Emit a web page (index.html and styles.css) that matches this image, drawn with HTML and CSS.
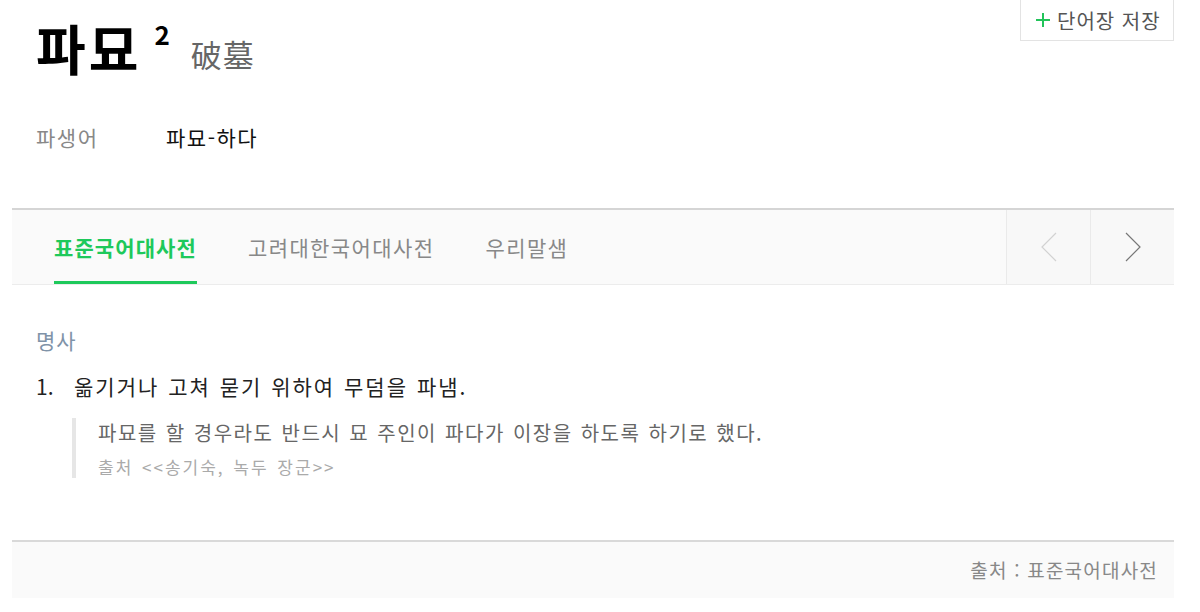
FILE: index.html
```html
<!DOCTYPE html>
<html lang="ko">
<head>
<meta charset="utf-8">
<link rel="stylesheet" href="styles.css">
</head>
<body>
<div class="page">
  <div class="top">
    <div class="head">
      <div class="title">
        <span class="word">파묘</span><sup class="num">2</sup><span class="hanja">破墓</span>
      </div>
      <div class="deriv">
        <span class="deriv-label">파생어</span>
        <span class="deriv-word">파묘-하다</span>
      </div>
    </div>
    <button class="save"><svg class="plus" width="16" height="16" viewBox="0 0 16 16"><path d="M8 1v14M1 8h14" stroke="#22c35a" stroke-width="2" fill="none"/></svg><span>단어장 저장</span></button>
  </div>

  <div class="tabs">
    <div class="tab-list">
      <span class="tab active">표준국어대사전</span>
      <span class="tab">고려대한국어대사전</span>
      <span class="tab">우리말샘</span>
    </div>
    <div class="nav">
      <div class="nav-btn">
        <svg width="16" height="30" viewBox="0 0 16 30"><polyline points="15,1 1,15 15,29" fill="none" stroke="#d2d2d2" stroke-width="1.2"/></svg>
      </div>
      <div class="nav-btn">
        <svg width="16" height="30" viewBox="0 0 16 30"><polyline points="1,1 15,15 1,29" fill="none" stroke="#777" stroke-width="1.2"/></svg>
      </div>
    </div>
  </div>

  <div class="content">
    <div class="pos">명사</div>
    <div class="sense"><span class="sense-num">1.</span><span>옮기거나 고쳐 묻기 위하여 무덤을 파냄.</span></div>
    <div class="example">
      <div class="ex-text">파묘를 할 경우라도 반드시 묘 주인이 파다가 이장을 하도록 하기로 했다.</div>
      <div class="ex-src">출처 &lt;&lt;송기숙, 녹두 장군&gt;&gt;</div>
    </div>
  </div>

  <div class="footer">출처 : 표준국어대사전</div>
</div>
</body>
</html>
```

FILE: styles.css
```css
* { box-sizing: border-box; }
html, body { margin: 0; padding: 0; background: #fff; }
body {
  font-family: "Noto Sans CJK KR", "Noto Sans", sans-serif;
  color: #222;
  width: 1200px;
  height: 612px;
  overflow: hidden;
}
.page {
  padding: 0 26px 0 12px;
}
.top {
  display: flex;
  justify-content: space-between;
  align-items: flex-start;
  height: 208px;
}
.head {
  padding-left: 24px;
  padding-top: 12px;
}
.title {
  display: flex;
  align-items: flex-start;
  height: 72px;
}
.word {
  font-size: 54px;
  font-weight: 700;
  color: #000;
  line-height: 72px;
  letter-spacing: 3px;
}
.num {
  font-size: 26px;
  font-weight: 700;
  color: #000;
  line-height: 30px;
  margin-left: 13px;
  margin-top: 7px;
  vertical-align: top;
}
.hanja {
  font-size: 31px;
  color: #666;
  margin-left: 21px;
  line-height: 44px;
  margin-top: 20px;
  letter-spacing: 1px;
}
.deriv {
  display: flex;
  margin-top: 38px;
  font-size: 21px;
  line-height: 30px;
  letter-spacing: 1.5px;
}
.deriv-label {
  color: #888;
  width: 130px;
}
.deriv-word {
  color: #111;
}
.save {
  margin-top: -1px;
  height: 42px;
  width: 154px;
  border: 1px solid #e3e3e3;
  background: #fff;
  font-family: inherit;
  font-size: 20px;
  letter-spacing: 1px;
  color: #555;
  padding: 0 0 0 14px;
  display: flex;
  align-items: center;
  gap: 6px;
  white-space: nowrap;
}
.plus {
  flex: none;
}
.tabs {
  display: flex;
  justify-content: space-between;
  height: 77px;
  border-top: 2px solid #d5d5d5;
  border-bottom: 1px solid #ececec;
  background: #fafafa;
}
.tab-list {
  display: flex;
  padding-left: 42px;
  gap: 51px;
}
.tab {
  font-size: 21px;
  letter-spacing: 1.4px;
  color: #888;
  line-height: 74px;
  height: 74px;
  border-bottom: 3px solid transparent;
  white-space: nowrap;
}
.tab.active {
  color: #1ec95b;
  font-weight: 700;
  letter-spacing: 1.1px;
  border-bottom-color: #1ec95b;
}
.nav {
  display: flex;
  background: #f8f8f8;
}
.nav-btn {
  width: 84px;
  border-left: 1px solid #eaeaea;
  display: flex;
  align-items: center;
  justify-content: center;
}
.content {
  padding: 40px 0 0 24px;
  height: 255px;
}
.pos {
  color: #7f93a8;
  font-size: 21px;
  letter-spacing: 1px;
  line-height: 30px;
}
.sense {
  display: flex;
  margin-top: 16px;
  font-size: 21px;
  letter-spacing: 2px;
  word-spacing: 1px;
  line-height: 30px;
  color: #222;
}
.sense-num {
  width: 38px;
  letter-spacing: 0;
}
.example {
  margin: 17px 0 0 36px;
  border-left: 4px solid #e6e6e6;
  padding-left: 22px;
}
.ex-text {
  font-size: 20px;
  letter-spacing: 1.5px;
  word-spacing: 1px;
  color: #666;
  line-height: 30px;
}
.ex-src {
  font-size: 17px;
  letter-spacing: 2px;
  word-spacing: 2px;
  color: #aaa;
  line-height: 22px;
  margin-top: 8px;
}
.footer {
  border-top: 2px solid #d9d9d9;
  background: #fafafa;
  height: 58px;
  text-align: right;
  padding-right: 16px;
  font-size: 19px;
  letter-spacing: 1.2px;
  line-height: 56px;
  color: #888;
}
```
